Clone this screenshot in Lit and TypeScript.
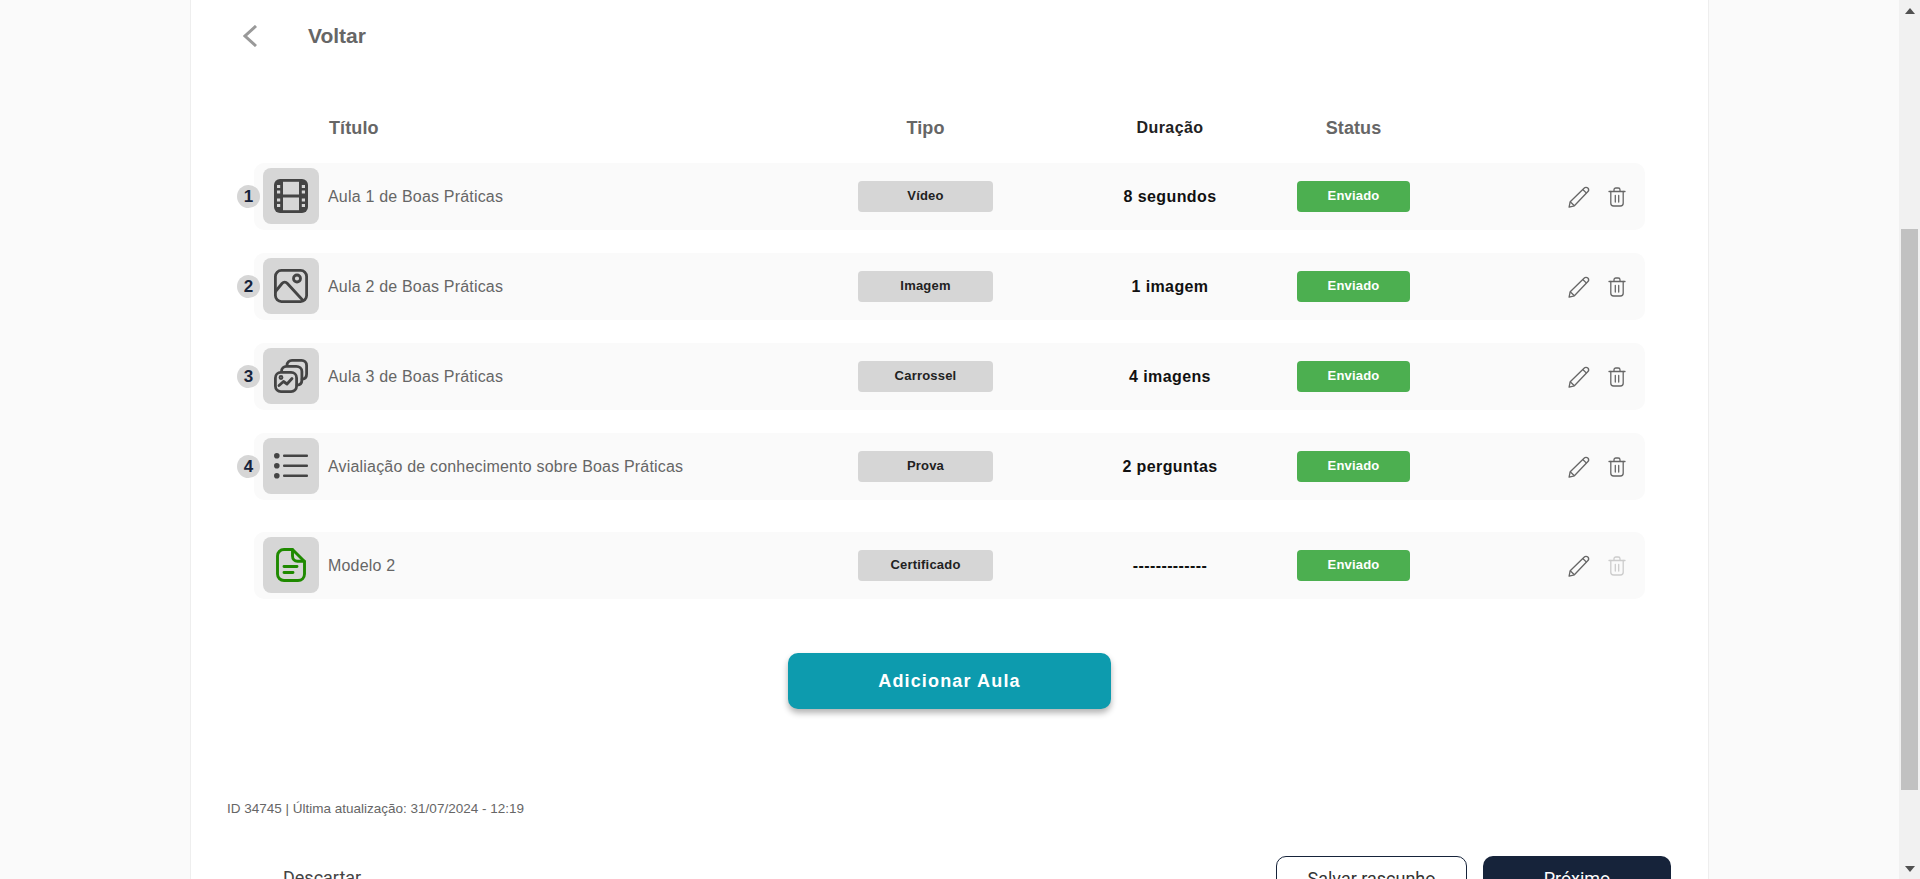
import { LitElement, html, css, svg } from 'lit';
import { customElement } from 'lit/decorators.js';

const TILE = '#d6d6d6';
const holes = [6, 11.5, 19.5, 25];

const icons: Record<string, unknown> = {
  film: svg`<svg viewBox="0 0 34 34" width="34" height="34">
    <rect width="34" height="34" rx="6" fill="#444"/>
    <rect x="9" y="2.800" width="16" height="12.700" fill=${TILE}/>
    <rect x="9" y="18.500" width="16" height="12.700" fill=${TILE}/>
    ${holes.map(
      (y) => svg`<rect x="3" y=${y} width="3.200" height="3" fill=${TILE}/><rect x="27.800" y=${y} width="3.200" height="3" fill=${TILE}/>`
    )}
  </svg>`,
  image: svg`<svg viewBox="0 0 34 34" width="34" height="34" fill="none" stroke="#444" stroke-width="2.800" stroke-linejoin="round" stroke-linecap="round">
    <rect x="1.400" y="1.400" width="31.200" height="31.200" rx="6"/>
    <circle cx="23" cy="9.500" r="3.500"/>
    <path d="M1.500 22.500l6.500-8c1.600-1.800 3.800-1.800 5.400 0L29 31.500"/>
  </svg>`,
  carousel: svg`<svg viewBox="0 0 34 34" width="34" height="34" fill="none" stroke="#444" stroke-width="2.800" stroke-linejoin="round" stroke-linecap="round">
    <path d="M13 6.500V6.200C13 3.400 15.200 1.400 18 1.400h9.500c2.900 0 5.100 2.200 5.100 5.100V15c0 3-1.800 5-4.600 5.200"/>
    <path d="M7.500 12.500C7.500 9.400 9.800 7.400 12.500 7.400h9.800c3 0 5.600 2.200 5.600 5.100V21c0 3-1.800 5-5 5.200"/>
    <rect x="1.400" y="13.400" width="21.200" height="19.200" rx="5.500"/>
    <path d="M5 26.500l4.500-4 3.500 2.500 5-5.500"/>
    <circle cx="7" cy="18.500" r="1"/>
  </svg>`,
  list: svg`<svg viewBox="0 0 34 34" width="34" height="34" fill="#444" stroke="none">
    <circle cx="2.800" cy="6.700" r="2.800"/><circle cx="2.800" cy="16.700" r="2.800"/><circle cx="2.800" cy="26.700" r="2.800"/>
    <rect x="9" y="5.400" width="25" height="2.700" rx="1"/><rect x="9" y="15.400" width="25" height="2.700" rx="1"/><rect x="9" y="25.400" width="25" height="2.700" rx="1"/>
  </svg>`,
  doc: svg`<svg viewBox="0 0 30 34" width="30" height="34" fill="none" stroke="#1f8a00" stroke-width="2.900" stroke-linejoin="round" stroke-linecap="round">
    <path d="M8 1.500h8.500L28.500 13.500V26c0 3.700-2.800 6.500-6.500 6.500H8c-3.700 0-6.500-2.800-6.500-6.500V8c0-3.700 2.800-6.500 6.500-6.500z"/>
    <path d="M16.500 1.700V8c0 3 2 5.200 5 5.200h6.800"/>
    <path d="M8 18.500h13M8 24.500h9"/>
  </svg>`,
};

const pencil = svg`<svg viewBox="0 0 20 20" width="22" height="22" fill="none" stroke="#666" stroke-width="1.200" stroke-linejoin="round">
  <path d="M1 19.200l1-4.900L14.600 2c1-1 2.500-1 3.400-.1s.9 2.400-.1 3.400L5.800 18z"/>
  <path d="M2 14.300l3.800 3.700M13.400 3.200l3.400 3.300"/>
</svg>`;

const trash = (color: string) => svg`<svg viewBox="0 0 18 20" width="18" height="20" fill="none" stroke=${color} stroke-width="1.300" stroke-linejoin="round" stroke-linecap="round">
  <path d="M1 4.500h16M6 4.500V2.800C6 1.700 6.800 1 7.800 1h2.400c1 0 1.800.7 1.800 1.800v1.700"/>
  <path d="M2.800 4.500v11.700c0 1.600 1.200 2.800 2.800 2.800h6.800c1.600 0 2.800-1.200 2.800-2.800V4.500"/>
  <path d="M7.300 8.500v6.500M10.700 8.500v6.500"/>
</svg>`;

const rows = [
  { n: '1', icon: 'film', title: 'Aula 1 de Boas Práticas', type: 'Vídeo', dur: '8 segundos' },
  { n: '2', icon: 'image', title: 'Aula 2 de Boas Práticas', type: 'Imagem', dur: '1 imagem' },
  { n: '3', icon: 'carousel', title: 'Aula 3 de Boas Práticas', type: 'Carrossel', dur: '4 imagens' },
  { n: '4', icon: 'list', title: 'Avialiação de conhecimento sobre Boas Práticas', type: 'Prova', dur: '2 perguntas' },
  { n: '', icon: 'doc', title: 'Modelo 2', type: 'Certificado', dur: '-------------' },
];

@customElement('app-root')
export class AppRoot extends LitElement {
  static styles = css`
    :host {
      display: flex;
      height: 879px;
      overflow: hidden;
      background: #fafafa;
      font-family: 'Liberation Sans', Arial, sans-serif;
    }
    .page {
      flex: 1;
      height: 879px;
      overflow: hidden;
    }
    .panel {
      width: 1519px;
      height: 960px;
      margin-left: 190px;
      box-sizing: border-box;
      background: #fff;
      border-left: 1px solid #eee;
      border-right: 1px solid #eee;
      padding-left: 63px;
    }
    .back {
      display: flex;
      align-items: center;
      height: 72px;
      margin-left: -11px;
      color: #666;
      font-size: 21px;
      font-weight: 700;
    }
    .back svg {
      margin-right: 51px;
    }
    .cols {
      display: grid;
      grid-template-columns: 74px 530px 135px 304px 113px 1fr;
      align-items: center;
      width: 1391px;
    }
    .head {
      margin-top: 45px;
      margin-bottom: 24px;
      height: 22px;
      color: #666;
      font-size: 18px;
      font-weight: 700;
      letter-spacing: 0.1px;
      text-align: center;
    }
    .head .h-title {
      grid-column: 2;
      text-align: left;
      padding-left: 1px;
    }
    .head .h-dur {
      color: #222;
      font-size: 16px;
      letter-spacing: 0.4px;
      padding-left: 50px;
    }
    .row {
      position: relative;
      height: 67px;
      margin-bottom: 23px;
      background: #fafafa;
      border-radius: 10px;
    }
    .row.last {
      margin-top: 32px;
      margin-bottom: 0;
    }
    .num {
      position: absolute;
      left: -17px;
      top: 22px;
      width: 23px;
      height: 23px;
      line-height: 23px;
      border-radius: 50%;
      background: #d6d6d6;
      color: #16233a;
      font-size: 17px;
      font-weight: 700;
      text-align: center;
    }
    .tile {
      display: flex;
      align-items: center;
      justify-content: center;
      align-self: start;
      width: 56px;
      height: 56px;
      margin: 5px 0 0 9px;
      border-radius: 8px;
      background: #d6d6d6;
    }
    .title {
      color: #666;
      font-size: 16px;
      letter-spacing: 0.19px;
    }
    .badge {
      height: 31px;
      line-height: 29px;
      border-radius: 4px;
      font-size: 13px;
      font-weight: 700;
      letter-spacing: 0.2px;
      text-align: center;
    }
    .type {
      background: #d6d6d6;
      color: #222;
    }
    .status {
      background: #4caf50;
      color: #fff;
    }
    .dur {
      padding-left: 50px;
      color: #111;
      font-size: 16px;
      font-weight: 700;
      letter-spacing: 0.4px;
      text-align: center;
    }
    .actions {
      display: flex;
      align-items: center;
      justify-content: flex-end;
      gap: 18px;
      padding-right: 19px;
    }
    .add-wrap {
      display: flex;
      width: 1391px;
      margin-top: 54px;
      padding-left: 534px;
      box-sizing: border-box;
    }
    .add {
      width: 323px;
      height: 56px;
      border: 0;
      border-radius: 10px;
      background: #0d9bae;
      box-shadow: 0 4px 6px rgba(0, 0, 0, 0.3);
      color: #fff;
      font: 700 18px 'Liberation Sans', Arial, sans-serif;
      letter-spacing: 1.15px;
    }
    .meta {
      margin: 92px 0 0 -27px;
      color: #666;
      font-size: 13.5px;
      line-height: 16px;
    }
    .foot {
      display: flex;
      align-items: flex-start;
      margin: 39px 0 0 -27px;
      width: 1444px;
      font-family: Roboto, sans-serif;
      font-size: 18px;
    }
    .discard {
      margin-left: 56px;
      margin-right: auto;
      color: #444;
      line-height: 44px;
    }
    .btn {
      box-sizing: border-box;
      height: 44px;
      border-radius: 10px;
      font: 400 18px Roboto, sans-serif;
    }
    .save {
      width: 191px;
      margin-right: 16px;
      border: 1px solid #16233a;
      background: #fff;
      color: #333;
    }
    .next {
      width: 188px;
      border: 0;
      background: #16233a;
      color: #fff;
    }
    .scrollbar {
      display: flex;
      flex-direction: column;
      flex: none;
      width: 21px;
      height: 879px;
      background: #f1f1f1;
    }
    .arrow {
      flex: none;
      display: flex;
      align-items: center;
      justify-content: center;
      height: 21px;
    }
    .track {
      flex: 1;
      padding: 208px 2px 0;
    }
    .thumb {
      height: 561px;
      background: #c1c1c1;
    }
  `;

  render() {
    return html`
      <div class="page">
        <div class="panel">
          <div class="back">
            <svg viewBox="0 0 14 22" width="14" height="22" fill="none" stroke="#999" stroke-width="3">
              <path d="M13 1L2 11l11 10"/>
            </svg>
            Voltar
          </div>
          <div class="cols head">
            <div class="h-title">Título</div>
            <div>Tipo</div>
            <div class="h-dur">Duração</div>
            <div>Status</div>
          </div>
          ${rows.map(
            (r, i) => html`
              <div class="cols row ${i === rows.length - 1 ? 'last' : ''}">
                ${r.n ? html`<div class="num">${r.n}</div>` : ''}
                <div class="tile">${icons[r.icon]}</div>
                <div class="title">${r.title}</div>
                <div class="badge type">${r.type}</div>
                <div class="dur">${r.dur}</div>
                <div class="badge status">Enviado</div>
                <div class="actions">
                  ${pencil}${trash(i === rows.length - 1 ? '#ccc' : '#666')}
                </div>
              </div>
            `
          )}
          <div class="add-wrap"><button class="add">Adicionar Aula</button></div>
          <div class="meta">ID 34745 | Última atualização: 31/07/2024 - 12:19</div>
          <div class="foot">
            <span class="discard">Descartar</span>
            <button class="btn save">Salvar rascunho</button>
            <button class="btn next">Próximo</button>
          </div>
        </div>
      </div>
      <div class="scrollbar">
        <div class="arrow">
          <svg viewBox="0 0 10 6" width="10" height="6"><path d="M5 0l5 6H0z" fill="#505050"/></svg>
        </div>
        <div class="track"><div class="thumb"></div></div>
        <div class="arrow">
          <svg viewBox="0 0 10 6" width="10" height="6"><path d="M0 0h10L5 6z" fill="#505050"/></svg>
        </div>
      </div>
    `;
  }
}
